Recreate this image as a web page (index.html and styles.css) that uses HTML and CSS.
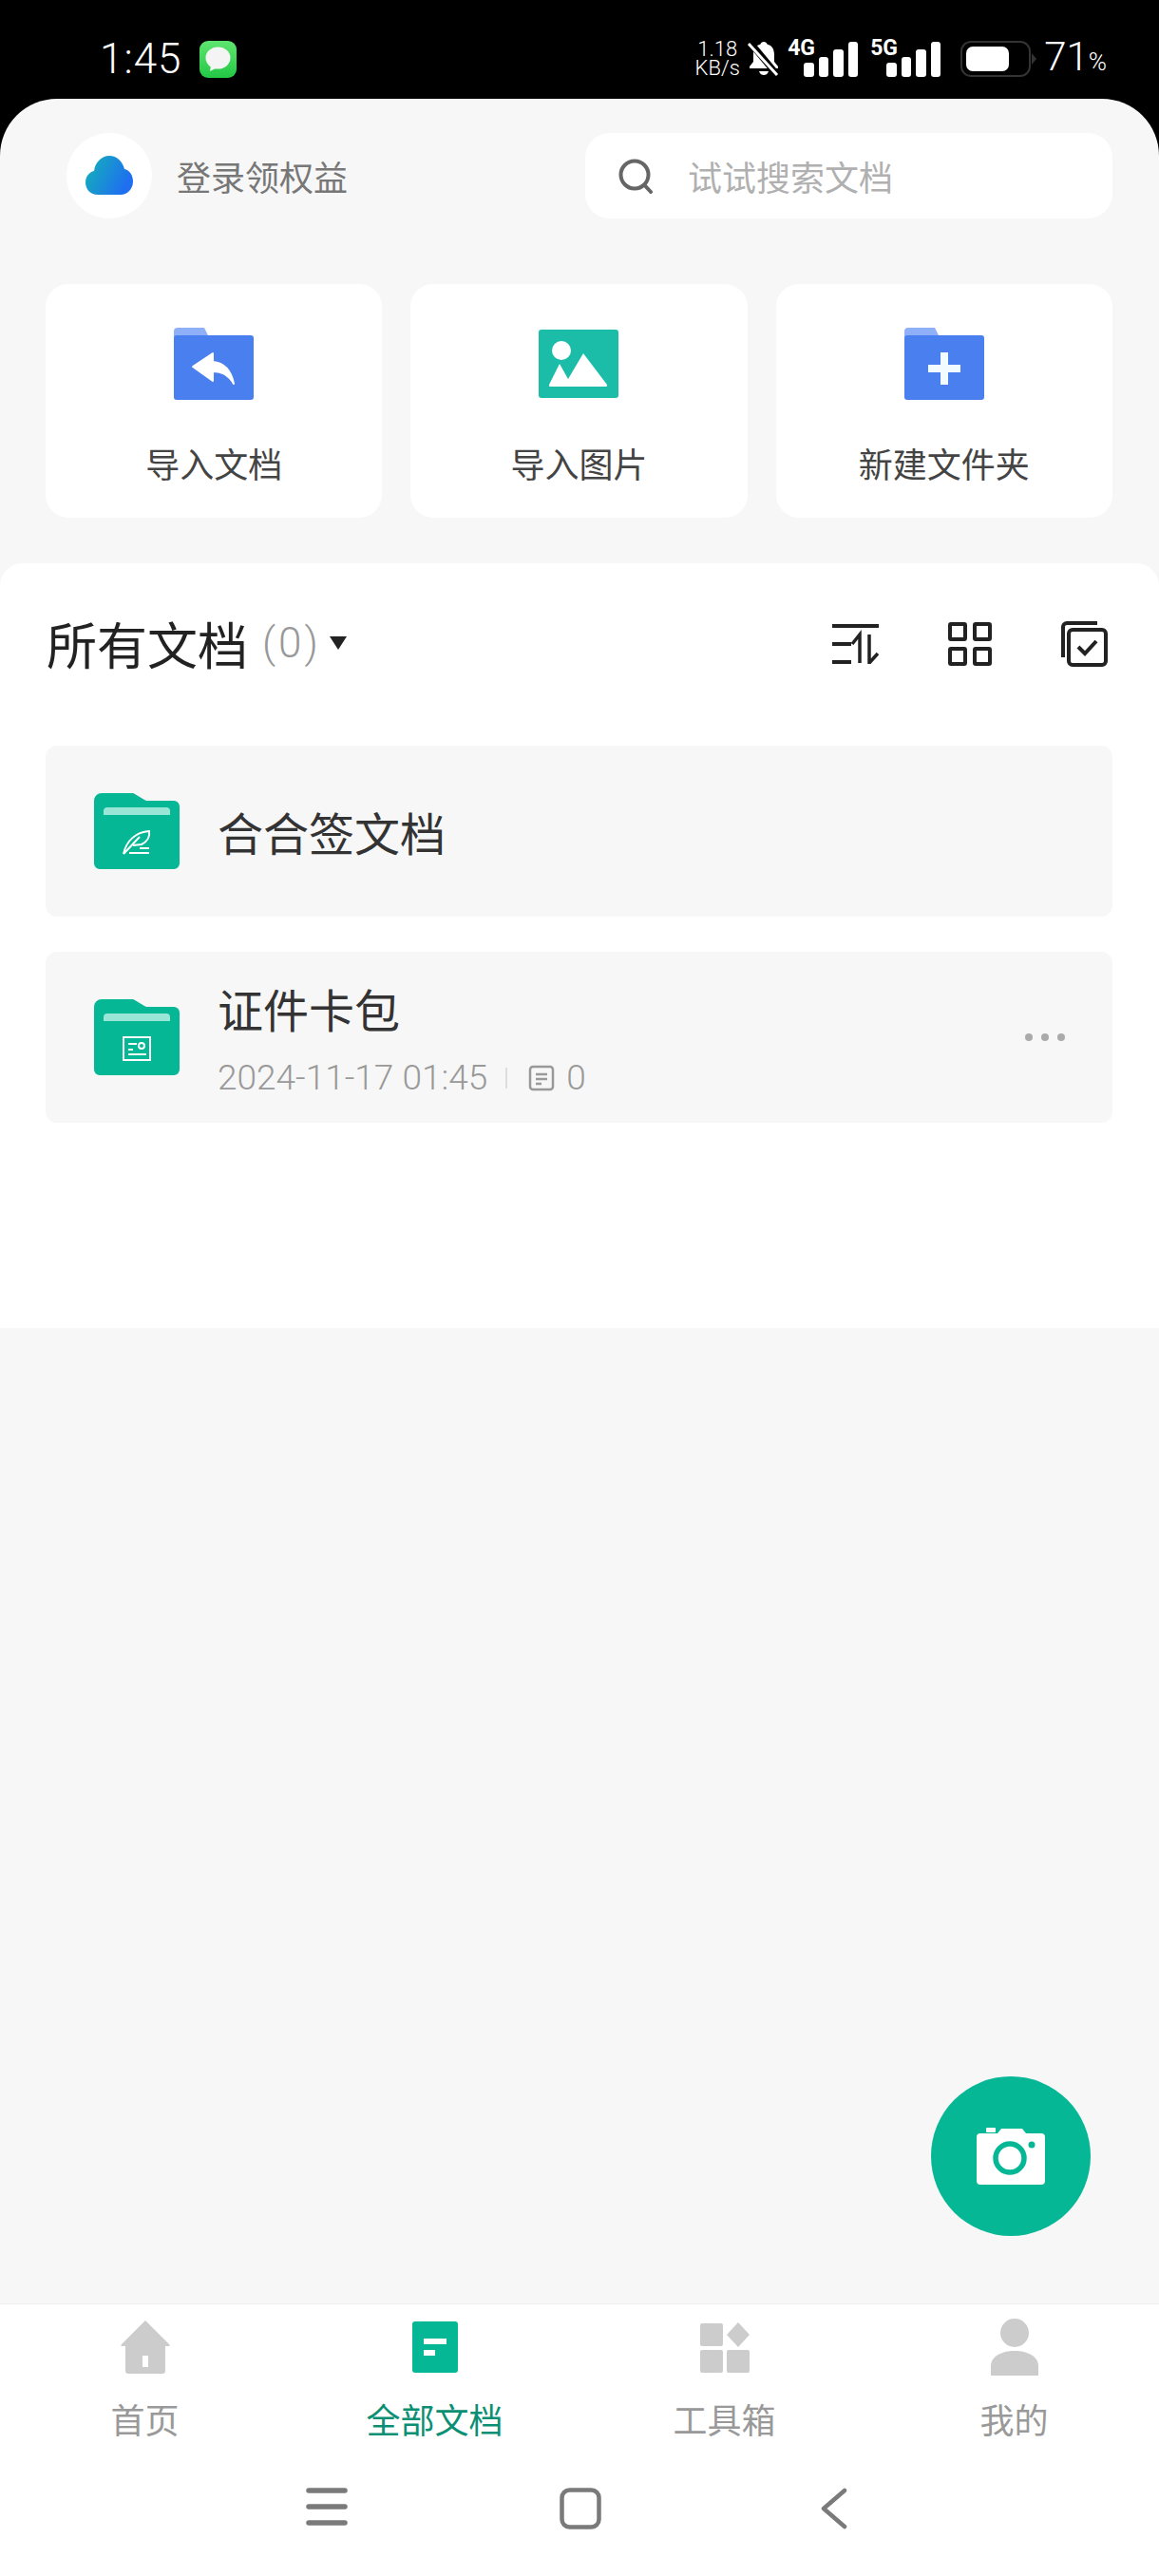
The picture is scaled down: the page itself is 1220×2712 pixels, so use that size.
FILE: index.html
```html
<!DOCTYPE html>
<html lang="zh-CN">
<head>
    <meta charset="UTF-8">
    <meta name="viewport" content="width=device-width, initial-scale=1.0">
    <title>全部文档</title>
    <link rel="stylesheet" href="styles.css">
</head>
<body>
    <div class="status-bar">
        <span class="time">1:45</span>
        <svg class="msg-icon" width="39" height="39" viewBox="0 0 39 39">
            <defs>
                <linearGradient id="msgBg" x1="0" y1="0" x2="0" y2="1"><stop offset="0" stop-color="#5fe56f"/><stop offset="1" stop-color="#22c845"/></linearGradient>
            </defs>
            <rect width="39" height="39" rx="9" fill="url(#msgBg)"/>
            <ellipse cx="19.5" cy="18" rx="13" ry="11.5" fill="#f4f4f4"/>
            <path d="M12 26 L11 32 L19 28 Z" fill="#f4f4f4"/>
        </svg>
        <div class="status-right">
            <div class="net-speed"><span>1.18</span><span>KB/s</span></div>
            <svg class="bell" width="38" height="38" viewBox="0 0 38 38">
                <path d="M19 1c2 0 3 1 3.500 2.500C28 5 30 9 30 15v7l4 5v2H4v-2l4-5v-7C8 9 10 5 15.500 3.500 16 2 17 1 19 1z" fill="#fff"/>
                <path d="M14 32h10c-1 3-3 4-5 4s-4-1-5-4z" fill="#fff"/>
                <path d="M4 1 L34 37" stroke="#000" stroke-width="7"/>
                <path d="M3 3 L33 36" stroke="#fff" stroke-width="3"/>
            </svg>
            <div class="signal">
                <span class="signal-type">4G</span>
                <div class="bars"><i class="bar-1"></i><i class="bar-2"></i><i class="bar-3"></i><i class="bar-4"></i></div>
            </div>
            <div class="signal signal-5g">
                <span class="signal-type">5G</span>
                <div class="bars"><i class="bar-1"></i><i class="bar-2"></i><i class="bar-3"></i><i class="bar-4"></i></div>
            </div>
            <div class="battery"><div class="battery-fill"></div></div>
            <span class="battery-num">71<small>%</small></span>
        </div>
    </div>

    <div class="sheet">
        <div class="top-row">
            <div class="avatar">
                <svg width="50" height="42" viewBox="0 0 50 42">
                    <defs>
                        <linearGradient id="cloudFill" x1="0" y1="0" x2="1" y2="0.4"><stop offset="0" stop-color="#12b5b5"/><stop offset="1" stop-color="#1f6ff0"/></linearGradient>
                    </defs>
                    <path d="M13 41C5 41 0 35 0 28c0-6 4-11 9-12C10 7 17 0 25 0c8 0 14 6 16 14 5 1 9 6 9 13 0 8-6 14-13 14z" fill="url(#cloudFill)"/>
                </svg>
            </div>
            <span class="login-text">登录领权益</span>
            <div class="search-box">
                <svg width="37" height="37" viewBox="0 0 37 37" fill="none" stroke="#666" stroke-width="4" stroke-linecap="round">
                    <circle cx="17" cy="17" r="14.500"/>
                    <path d="M27.500 28 L34 35"/>
                </svg>
                <span>试试搜索文档</span>
            </div>
        </div>

        <div class="cards">
            <div class="card">
                <svg width="84" height="76" viewBox="0 0 84 76">
                    <path d="M0 4a4 4 0 0 1 4-4h28l5 10H0z" fill="#8fb0f8"/>
                    <path d="M0 11a3 3 0 0 1 3-3h78a3 3 0 0 1 3 3v62a3 3 0 0 1-3 3H3a3 3 0 0 1-3-3z" fill="#4a7ff0"/>
                    <path d="M41 27v9c11 1 19 8 22 23-5-9-12-13-22-13v10L20 41z" fill="#fff" stroke="#fff" stroke-width="2" stroke-linejoin="round"/>
                </svg>
                <span>导入文档</span>
            </div>
            <div class="card">
                <svg width="84" height="76" viewBox="0 -2 84 76">
                    <rect width="84" height="72" rx="3" fill="#1bbda8"/>
                    <circle cx="24" cy="22" r="10" fill="#fff"/>
                    <path d="M12 60c-1 0-1-1-1-2l11-22 9 16 16-27 25 33c0 1 0 2-1 2z" fill="#fff"/>
                </svg>
                <span>导入图片</span>
            </div>
            <div class="card">
                <svg width="84" height="76" viewBox="0 0 84 76">
                    <path d="M0 4a4 4 0 0 1 4-4h28l5 10H0z" fill="#8fb0f8"/>
                    <path d="M0 11a3 3 0 0 1 3-3h78a3 3 0 0 1 3 3v62a3 3 0 0 1-3 3H3a3 3 0 0 1-3-3z" fill="#4a7ff0"/>
                    <path d="M38 26h8v13h13v8H46v13h-8V47H25v-8h13z" fill="#f2fbff"/>
                </svg>
                <span>新建文件夹</span>
            </div>
        </div>

        <div class="panel">
            <div class="panel-head">
                <span class="panel-title">所有文档</span>
                <span class="count">(0)</span>
                <span class="caret"></span>
                <div class="panel-tools">
                    <svg width="50" height="42" viewBox="0 0 50 42" fill="none" stroke="#222" stroke-width="4">
                        <path d="M0 2h49M0 21h20M0 40h20"/>
                        <path d="M29 41V11L21 21M39 11V41L48 31" stroke-width="3.500"/>
                    </svg>
                    <svg width="46" height="46" viewBox="0 0 46 46" fill="none" stroke="#222" stroke-width="4">
                        <rect x="2" y="2" width="16" height="16" rx="1"/>
                        <rect x="28" y="2" width="16" height="16" rx="1"/>
                        <rect x="2" y="28" width="16" height="16" rx="1"/>
                        <rect x="28" y="28" width="16" height="16" rx="1"/>
                    </svg>
                    <svg width="50" height="48" viewBox="0 0 50 48" fill="none" stroke="#222" stroke-width="4">
                        <path d="M3 38V6a4 4 0 0 1 4-4h32"/>
                        <rect x="9" y="9" width="39" height="37" rx="4"/>
                        <path d="M19 27l7 7 12-13"/>
                    </svg>
                </div>
            </div>

            <div class="doc-row">
                <svg class="folder" width="90" height="80" viewBox="0 0 90 80">
                    <path d="M0 8a8 8 0 0 1 8-8h31a6 6 0 0 1 4 1l10 6a6 6 0 0 0 3 1h28a6 6 0 0 1 6 6v60a6 6 0 0 1-6 6H6a6 6 0 0 1-6-6z" fill="#05b795"/>
                    <path d="M10 19a4 4 0 0 1 4-4h62a4 4 0 0 1 4 4v4H10z" fill="#9ae6d6"/>
                    <path d="M31 64C34 50 44 41 58 40c1 6-2 11-8 14l-9 1M31 64l17-18" fill="none" stroke="#fff" stroke-width="2"/>
                    <path d="M48 58h10M37 63h21" stroke="#fff" stroke-width="2"/>
                </svg>
                <div class="doc-info">
                    <div class="doc-name">合合签文档</div>
                </div>
            </div>

            <div class="doc-row">
                <svg class="folder" width="90" height="80" viewBox="0 0 90 80">
                    <path d="M0 8a8 8 0 0 1 8-8h31a6 6 0 0 1 4 1l10 6a6 6 0 0 0 3 1h28a6 6 0 0 1 6 6v60a6 6 0 0 1-6 6H6a6 6 0 0 1-6-6z" fill="#05b795"/>
                    <path d="M10 19a4 4 0 0 1 4-4h62a4 4 0 0 1 4 4v4H10z" fill="#9ae6d6"/>
                    <rect x="31" y="40" width="28" height="24" fill="none" stroke="#fff" stroke-width="2"/>
                    <circle cx="50" cy="49" r="3" fill="none" stroke="#fff" stroke-width="2"/>
                    <path d="M36 47h9M36 53h5M36 58h19" stroke="#fff" stroke-width="2"/>
                </svg>
                <div class="doc-info">
                    <div class="doc-name">证件卡包</div>
                    <div class="doc-meta">
                        <span>2024-11-17 01:45</span>
                        <i class="meta-line"></i>
                        <svg width="28" height="28" viewBox="0 0 28 28" fill="none" stroke="#999" stroke-width="2.500">
                            <rect x="2" y="2" width="24" height="24" rx="3"/>
                            <path d="M8 10h12M8 15h12M8 20h6"/>
                        </svg>
                        <span class="meta-num">0</span>
                    </div>
                </div>
                <div class="more"><i></i><i></i><i></i></div>
            </div>
        </div>
    </div>

    <div class="camera-btn">
        <svg width="72" height="60" viewBox="0 0 72 60">
            <rect x="10" y="0" width="10" height="5" rx="1" fill="#fff"/>
            <path d="M4 6h18l4-5h22l4 5h16a4 4 0 0 1 4 4v46a4 4 0 0 1-4 4H4a4 4 0 0 1-4-4V10a4 4 0 0 1 4-4z" fill="#fff"/>
            <circle cx="35" cy="32" r="15" fill="#fff" stroke="#05b795" stroke-width="5.500"/>
            <circle cx="58" cy="18" r="3.500" fill="#05b795"/>
        </svg>
    </div>

    <div class="tabbar">
        <div class="tab">
            <svg width="52" height="56" viewBox="0 0 52 56">
                <path d="M26 0L51 25a1 1 0 0 1-1 2h-3v26a3 3 0 0 1-3 3H8a3 3 0 0 1-3-3V27H2a1 1 0 0 1-1-2z" fill="#ccc"/>
                <rect x="23" y="37" width="6" height="12" fill="#fff"/>
            </svg>
            <span>首页</span>
        </div>
        <div class="tab tab-active">
            <svg width="48" height="54" viewBox="0 0 48 54">
                <rect width="48" height="54" rx="3" fill="#05b795"/>
                <path d="M12 18h24v6H12zM12 30h12v6H12z" fill="#fff"/>
            </svg>
            <span>全部文档</span>
        </div>
        <div class="tab">
            <svg width="52" height="54" viewBox="0 0 52 54">
                <rect x="0" y="2" width="24" height="24" rx="2" fill="#ccc"/>
                <path d="M40 1l12 13-12 13-12-13z" fill="#ccc"/>
                <rect x="0" y="30" width="24" height="24" rx="2" fill="#ccc"/>
                <rect x="28" y="30" width="24" height="24" rx="2" fill="#ccc"/>
            </svg>
            <span>工具箱</span>
        </div>
        <div class="tab">
            <svg width="52" height="60" viewBox="0 0 52 60">
                <circle cx="26" cy="15" r="15" fill="#ccc"/>
                <path d="M1 60v-10c0-10 11-16 25-16s25 6 25 16v10z" fill="#ccc"/>
            </svg>
            <span>我的</span>
        </div>
    </div>

    <div class="sys-nav">
        <svg width="44" height="40" viewBox="0 0 44 40" fill="none" stroke="#7a7a7a" stroke-width="5.500" stroke-linecap="round">
            <path d="M3 3h38M3 20h38M3 37h38"/>
        </svg>
        <svg width="44" height="44" viewBox="0 0 44 44" fill="none" stroke="#7a7a7a" stroke-width="4.500">
            <rect x="2.500" y="2.500" width="39" height="39" rx="8"/>
        </svg>
        <svg class="back-icon" width="28" height="44" viewBox="0 0 28 44" fill="none" stroke="#7a7a7a" stroke-width="4.500" stroke-linecap="round" stroke-linejoin="round">
            <path d="M25 3L3 22l22 19"/>
        </svg>
    </div>
</body>
</html>
```

FILE: styles.css
```css
* {
    box-sizing: border-box;
}
body {
    margin: 0;
    width: 1220px;
    height: 2712px;
    overflow: hidden;
    position: relative;
    display: flex;
    flex-direction: column;
    background-color: #000;
    font-family: "Noto Sans CJK SC", "Noto Sans", sans-serif;
    color: #333;
}
i {
    display: block;
}

/* status bar */
.status-bar {
    height: 104px;
    flex: none;
    display: flex;
    align-items: center;
    padding: 22px 55px 0 105px;
    color: #fff;
    font-family: Roboto, sans-serif;
}
.time {
    font-size: 44px;
    font-weight: 300;
    line-height: 44px;
    letter-spacing: 1px;
    margin-top: -2px;
}
.msg-icon {
    margin-left: 19px;
    margin-top: -2px;
}
.status-right {
    margin-left: auto;
    display: flex;
    align-items: center;
    margin-top: -2px;
}
.net-speed {
    display: flex;
    flex-direction: column;
    align-items: center;
    font-size: 22px;
    font-weight: 300;
    line-height: 20px;
    width: 44px;
}
.bell {
    margin-left: 8px;
}
.signal {
    position: relative;
    width: 74px;
    height: 38px;
    margin-left: 6px;
}
.signal-5g {
    margin-left: 13px;
}
/* the network label sits over the top-left of the bars */
.signal-type {
    position: absolute;
    left: 0;
    top: -2px;
    font-size: 23px;
    line-height: 19px;
    font-weight: 700;
}
.bars {
    position: absolute;
    right: 0;
    bottom: 0;
    display: flex;
    align-items: flex-end;
    gap: 5px;
}
.bars i {
    width: 10.500px;
    background-color: #fff;
    border-radius: 3px;
}
.bar-1 { height: 15px; }
.bar-2 { height: 21px; }
.bar-3 { height: 29px; }
.bar-4 { height: 37px; }
.battery {
    position: relative;
    width: 74px;
    height: 38px;
    margin-left: 21px;
    padding: 4px;
    border: 2px solid #333;
    border-radius: 11px;
}
.battery::after {
    content: "";
    position: absolute;
    right: -8px;
    top: 11px;
    border-left: 5px solid #333;
    border-top: 6px solid transparent;
    border-bottom: 6px solid transparent;
}
.battery-fill {
    width: 45px;
    height: 100%;
    background-color: #fff;
    border-radius: 7px;
}
.battery-num {
    font-size: 42px;
    font-weight: 300;
    line-height: 46px;
    margin-left: 14px;
}
.battery-num small {
    font-size: 26px;
}

/* main sheet */
.sheet {
    flex: 1;
    background-color: #f7f7f7;
    border-radius: 60px 60px 0 0;
    padding-top: 36px;
    display: flex;
    flex-direction: column;
}
.top-row {
    display: flex;
    align-items: center;
    height: 90px;
    padding: 0 49px 0 70px;
}
.avatar {
    width: 90px;
    height: 90px;
    border-radius: 50%;
    background-color: #fff;
    display: flex;
    align-items: center;
    justify-content: center;
}
.login-text {
    margin-left: 26px;
    font-size: 36px;
    color: #777;
}
.search-box {
    margin-left: auto;
    width: 555px;
    height: 90px;
    background-color: #fff;
    border-radius: 26px;
    display: flex;
    align-items: center;
    padding-left: 35px;
    gap: 36px;
    font-size: 36px;
    color: #b0b0b0;
}
.cards {
    display: flex;
    gap: 30px;
    padding: 0 49px 0 48px;
    margin-top: 69px;
}
.card {
    flex: 1;
    height: 246px;
    background-color: #fff;
    border-radius: 24px;
    display: flex;
    flex-direction: column;
    align-items: center;
    padding-top: 46px;
    font-size: 36px;
    color: #444;
}
.card svg {
    height: 76px;
    margin-bottom: 40px;
}

/* document list */
.panel {
    margin-top: 48px;
    height: 805px;
    background-color: #fff;
    border-radius: 24px 24px 0 0;
    padding: 0 49px 0 48px;
}
.panel-head {
    height: 192px;
    padding-top: 49px;
    display: flex;
    align-items: flex-start;
}
.panel-title {
    font-size: 53px;
    line-height: 70px;
    color: #222;
    margin-left: 1px;
}
.count {
    font-family: Roboto, sans-serif;
    font-weight: 300;
    font-size: 44px;
    line-height: 70px;
    letter-spacing: 3px;
    color: #999;
    margin-left: 15px;
}
.caret {
    margin: 28px 0 0 9px;
    width: 0;
    height: 0;
    border-left: 9px solid transparent;
    border-right: 9px solid transparent;
    border-top: 14px solid #222;
}
.panel-tools {
    margin-left: auto;
    margin-top: 12px;
    margin-right: 5px;
    display: flex;
    align-items: center;
    gap: 72px;
}
.doc-row {
    display: flex;
    align-items: center;
    height: 180px;
    background-color: #f7f7f7;
    border-radius: 12px;
    padding: 0 50px 0 51px;
    margin-bottom: 37px;
}
.folder {
    flex: none;
}
.doc-info {
    margin-left: 40px;
    flex: 1;
}
.doc-name {
    font-size: 48px;
    line-height: 64px;
    color: #333;
}
.doc-meta {
    display: flex;
    align-items: center;
    font-family: Roboto, sans-serif;
    font-weight: 300;
    font-size: 37px;
    line-height: 40px;
    color: #999;
    margin-top: 22px;
}
.meta-line {
    width: 2px;
    height: 22px;
    background-color: #ddd;
    margin: 0 22px 0 19px;
}
.meta-num {
    margin-left: 12px;
}
.more {
    display: flex;
    gap: 9px;
}
.more i {
    width: 8px;
    height: 8px;
    border-radius: 50%;
    background-color: #aaa;
}

/* floating camera button over the page */
.camera-btn {
    position: absolute;
    left: 980px;
    top: 2186px;
    width: 168px;
    height: 168px;
    border-radius: 50%;
    background-color: #05b795;
    display: flex;
    align-items: center;
    justify-content: center;
}

/* bottom tabs */
.tabbar {
    flex: none;
    height: 167px;
    display: grid;
    grid-template-columns: repeat(4, 305px);
    background-color: #fff;
    border-top: 1px solid #eee;
    padding-top: 15px;
}
.tab {
    display: flex;
    flex-direction: column;
    align-items: center;
    font-size: 36px;
    line-height: 48px;
    color: #999;
}
.tab svg {
    height: 60px;
    margin-bottom: 21px;
}
.tab-active {
    color: #0a8f75;
}

/* system navigation */
.sys-nav {
    flex: none;
    height: 120px;
    background-color: #fff;
    display: flex;
    align-items: flex-start;
    padding: 27px 0 0 322px;
    gap: 223px;
}
.back-icon {
    margin-left: 8px;
}
```
